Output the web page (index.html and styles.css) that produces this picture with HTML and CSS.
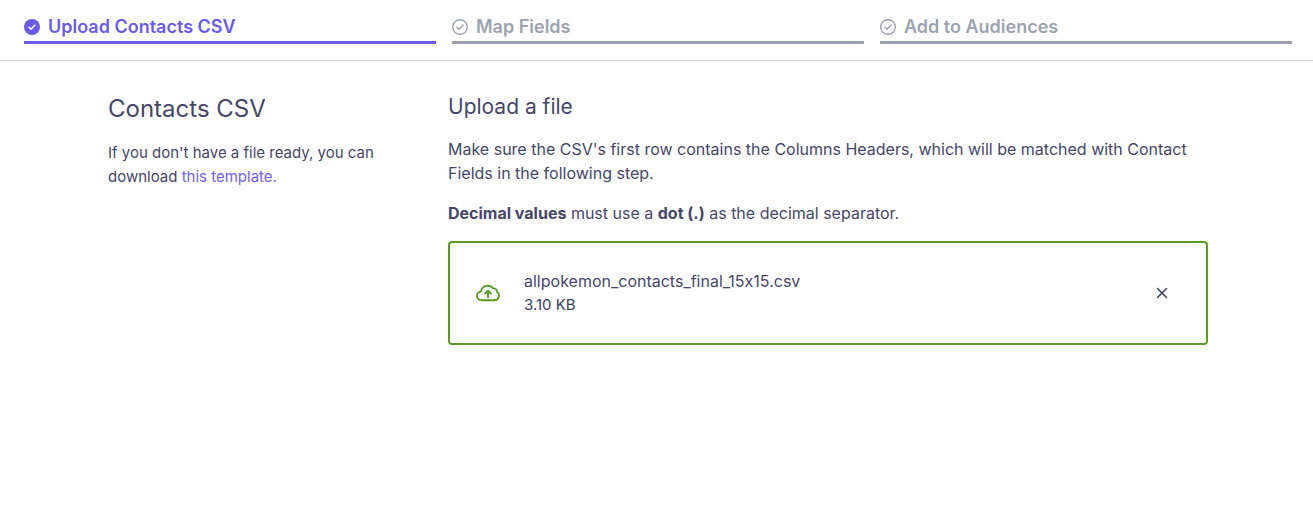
FILE: index.html
```
<!DOCTYPE html>
<html lang="en">
<head>
<meta charset="utf-8">
<meta name="viewport" content="width=device-width, initial-scale=1">
<title>Upload Contacts CSV</title>
<link rel="stylesheet" href="styles.css">
</head>
<body>
<header class="header">
  <ol class="steps">
    <li class="step step-active" aria-current="step">
      <svg class="step-icon" viewBox="0 0 16 16" aria-hidden="true"><circle cx="8" cy="8" r="8" fill="currentColor"/><path d="M5 8.2l2.1 1.900 3.800-3.900" fill="none" stroke="#fff" stroke-width="1.500" stroke-linecap="round" stroke-linejoin="round"/></svg>
      <span>Upload Contacts CSV</span>
    </li>
    <li class="step">
      <svg class="step-icon" viewBox="0 0 16 16" aria-hidden="true"><circle cx="8" cy="8" r="7.3" fill="none" stroke="currentColor" stroke-width="1.4"/><path d="M4.800 8.300l2.200 2 4.200-4.400" fill="none" stroke="currentColor" stroke-width="1.400" stroke-linecap="round" stroke-linejoin="round"/></svg>
      <span>Map Fields</span>
    </li>
    <li class="step">
      <svg class="step-icon" viewBox="0 0 16 16" aria-hidden="true"><circle cx="8" cy="8" r="7.3" fill="none" stroke="currentColor" stroke-width="1.4"/><path d="M4.800 8.300l2.200 2 4.200-4.400" fill="none" stroke="currentColor" stroke-width="1.400" stroke-linecap="round" stroke-linejoin="round"/></svg>
      <span>Add to Audiences</span>
    </li>
  </ol>
</header>
<main class="main">
  <div class="content">
    <section class="intro">
      <h1 class="title">Contacts CSV</h1>
      <p class="text">If you don't have a file ready, you can download <a class="link" href="#template">this template.</a></p>
    </section>
    <section class="upload">
      <h2 class="subtitle">Upload a file</h2>
      <p class="text">Make sure the CSV's first row contains the Columns Headers, which will be matched with Contact Fields in the following step.</p>
      <p class="text"><strong>Decimal values</strong> must use a <strong>dot (.)</strong> as the decimal separator.</p>
      <div class="file">
        <svg class="file-icon" viewBox="0 0 24 24" aria-hidden="true"><g fill="none" stroke="currentColor" stroke-width="1.9" stroke-linecap="round" stroke-linejoin="round"><path d="M5.600 19.200h12.800a4.600 4.600 0 0 0 2.500-8.400c.3-2.200-1.700-3.900-3.800-3.300C15.900 5.700 13.700 4.700 11.400 4.700c-3.400 0-6.100 2.500-6.200 5.700C2.700 10.900 1 12.900 1 15.100c0 2.300 2 4.100 4.600 4.100z"/><path d="M12 16.200v-6.200M9.100 12.500l2.900-2.800 2.900 2.800"/></g></svg>
        <div class="file-info">
          <div>allpokemon_contacts_final_15x15.csv</div>
          <div class="file-size">3.10 KB</div>
        </div>
        <button class="remove" type="button" aria-label="Remove file">
          <svg class="remove-icon" viewBox="0 0 12 12" aria-hidden="true"><path d="M1.500 1.500l9 9M10.500 1.500l-9 9" fill="none" stroke="currentColor" stroke-width="1.500" stroke-linecap="round"/></svg>
        </button>
      </div>
    </section>
  </div>
</main>
</body>
</html>
```
FILE: styles.css
```
* {
  box-sizing: border-box;
}

body {
  margin: 0;
  background: #fff;
  color: #464669;
  font-family: Inter, "Liberation Sans", sans-serif;
  font-size: 15px;
  font-feature-settings: "calt" 0;
  line-height: 24px;
}

.header {
  padding: 12px 21px 16px 24px;
  border-bottom: 1px solid #d1d1d1;
}

.steps {
  display: grid;
  grid-template-columns: repeat(3, 1fr);
  gap: 16px;
  margin: 0;
  padding: 0;
  list-style: none;
}

.step {
  display: flex;
  align-items: center;
  gap: 8px;
  height: 32px;
  border-bottom: 3px solid #9ca0af;
  color: #9ca3af;
  font-size: 18px;
  font-weight: 600;
}

.step-active {
  border-color: #6b5ce7;
  color: #6b5ce7;
}

.step-icon {
  width: 16px;
  height: 16px;
}

.main {
  padding: 32px 0 32px 3px;
}

.content {
  display: grid;
  grid-template-columns: 324px 1fr;
  gap: 16px;
  max-width: 1100px;
  margin: 0 auto;
}

.intro {
  max-width: 280px;
}

.upload {
  font-size: 16px;
}

.title {
  margin: 0 0 16px;
  font-size: 24px;
  font-weight: 400;
  line-height: 32px;
}

.subtitle {
  margin: 0 0 16px;
  font-size: 21px;
  font-weight: 400;
  line-height: 28px;
}

.text {
  margin: 0 0 16px;
}

.link {
  color: #6f63f6;
  text-decoration: none;
}

.file {
  display: flex;
  align-items: center;
  gap: 24px;
  padding: 26px;
  border: 2px solid #5c9a26;
  border-radius: 4px;
}

.file-icon {
  width: 24px;
  height: 24px;
  color: #5c9a26;
}

.file-info {
  flex: 1;
}

.file-size {
  color: #374162;
  font-size: 15px;
}

.remove {
  display: grid;
  place-items: center;
  width: 36px;
  height: 36px;
  padding: 0;
  border: 0;
  background: none;
  color: #374162;
  cursor: pointer;
}

.remove-icon {
  width: 12px;
  height: 12px;
}
```
